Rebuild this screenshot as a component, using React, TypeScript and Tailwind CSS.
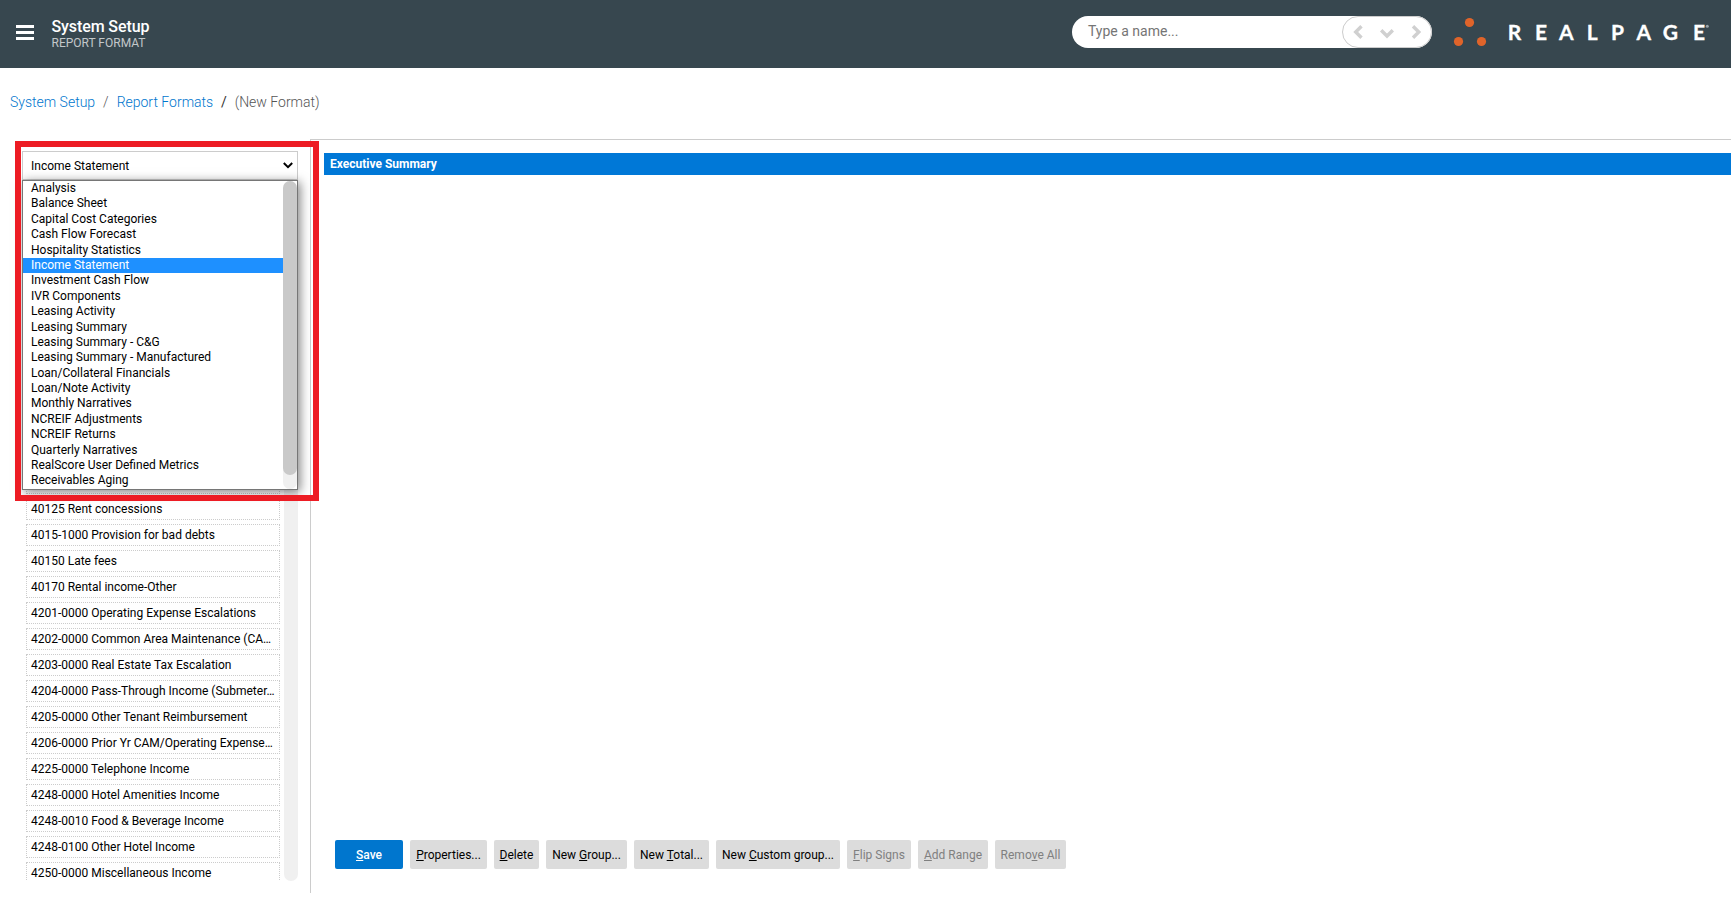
import React, { useState } from "react";

interface IAction {
  before: string;
  key: string;
  after: string;
  className: string;
  disabled?: boolean;
}

const categories: string[] = [
  "Analysis",
  "Balance Sheet",
  "Capital Cost Categories",
  "Cash Flow Forecast",
  "Hospitality Statistics",
  "Income Statement",
  "Investment Cash Flow",
  "IVR Components",
  "Leasing Activity",
  "Leasing Summary",
  "Leasing Summary - C&G",
  "Leasing Summary - Manufactured",
  "Loan/Collateral Financials",
  "Loan/Note Activity",
  "Monthly Narratives",
  "NCREIF Adjustments",
  "NCREIF Returns",
  "Quarterly Narratives",
  "RealScore User Defined Metrics",
  "Receivables Aging",
];

const accounts: string[] = [
  "",
  "40125 Rent concessions",
  "4015-1000 Provision for bad debts",
  "40150 Late fees",
  "40170 Rental income-Other",
  "4201-0000 Operating Expense Escalations",
  "4202-0000 Common Area Maintenance (CA…",
  "4203-0000 Real Estate Tax Escalation",
  "4204-0000 Pass-Through Income (Submeter…",
  "4205-0000 Other Tenant Reimbursement",
  "4206-0000 Prior Yr CAM/Operating Expense…",
  "4225-0000 Telephone Income",
  "4248-0000 Hotel Amenities Income",
  "4248-0010 Food & Beverage Income",
  "4248-0100 Other Hotel Income",
  "4250-0000 Miscellaneous Income",
];

const actions: IAction[] = [
  { before: "", key: "P", after: "roperties...", className: "w-[77px]" },
  { before: "", key: "D", after: "elete", className: "w-[45px]" },
  { before: "New ", key: "G", after: "roup...", className: "w-[81px]" },
  { before: "New ", key: "T", after: "otal...", className: "w-[75px]" },
  { before: "New ", key: "C", after: "ustom group...", className: "w-[124px]" },
  { before: "", key: "F", after: "lip Signs", className: "w-[64px]", disabled: true },
  { before: "", key: "A", after: "dd Range", className: "w-[70px]", disabled: true },
  { before: "Remo", key: "v", after: "e All", className: "w-[71px]", disabled: true },
];

const Logo = () => (
  <svg width="262" height="36" viewBox="0 0 262 36" className="block">
    <g fill="#e0642a">
      <circle cx="19.5" cy="8.5" r="4.6" />
      <circle cx="8.5" cy="27.5" r="4.6" />
      <circle cx="31.5" cy="27.5" r="4.6" />
    </g>
    <text
      x="57.7 85 109 136.800 161 186.500 212.700 243"
      y="26"
      fill="#fff"
      stroke="#fff"
      strokeWidth="0.3"
      className="font-['Lato'] text-[21px] font-bold"
    >
      REALPAGE
    </text>
    <circle cx="257.300" cy="12.300" r="1.500" fill="#9aa4a9" />
  </svg>
);

const Header = () => (
  <header className="flex h-[68px] items-start bg-[#37474f]">
    <button className="mt-[25px] ml-4 flex w-[18px] flex-col gap-[3px]">
      <span className="h-[3px] w-full bg-white"></span>
      <span className="h-[3px] w-full bg-white"></span>
      <span className="h-[3px] w-full bg-white"></span>
    </button>
    <div className="mt-[17px] ml-[17.5px] flex-1">
      <h1 className="text-base leading-[19px] font-medium tracking-[-0.1px] text-white">
        System Setup
      </h1>
      <p className="text-xs leading-[14px] text-[#c3c8ca]">REPORT FORMAT</p>
    </div>
    <div className="mt-4 flex h-8 w-[360px] rounded-full bg-white">
      <span className="flex-1 pl-4 text-sm leading-[30px] text-[#757575]">Type a name...</span>
      <div className="flex w-[90px] rounded-full border border-[#ccc]">
        <svg width="88" height="30" viewBox="0 0 88 30" fill="none" stroke="#d0d0d0" strokeWidth="3.4">
          <path d="M18.500 9.200L12.700 15l5.800 5.800" />
          <path d="M38.200 13.200L44 19l5.800-5.800" />
          <path d="M70 9.200L75.800 15L70 20.800" />
        </svg>
      </div>
    </div>
    <div className="mt-[14px] mr-[19px] ml-[18px]">
      <Logo />
    </div>
  </header>
);

const CategorySelect = () => {
  const [selected, setSelected] = useState<string>("Income Statement");

  return (
    <div className="relative ml-[22px] w-[276px]">
      <div className="flex h-[29px] items-center justify-between border border-[#ccc] bg-white pr-[4px] pl-2 text-xs">
        <span>{selected}</span>
        <svg width="10" height="7" viewBox="0 0 10 7" fill="none" stroke="#000" strokeWidth="2">
          <path d="M0.800 1L5 5.200L9.200 1" />
        </svg>
      </div>

      {/* option list */}
      <div className="absolute top-[29px] left-0 flex h-[310px] w-[276px] border border-[#767676] bg-white shadow-[2px_2px_10px_rgba(0,0,0,0.5)]">
        <ul className="flex-1">
          {categories.map((name) => (
            <li
              key={name}
              onClick={() => setSelected(name)}
              className={`h-[15.4px] pl-2 text-xs leading-[14px] ${
                name === selected ? "bg-[#1e90ff] text-white" : ""
              }`}
            >
              {name}
            </li>
          ))}
        </ul>
        <div className="w-[14px] rounded-full bg-[#f0f0f0]">
          <div className="h-[294px] rounded-full bg-[#c9c9c9]"></div>
        </div>
      </div>

      {/* highlight frame */}
      <div className="pointer-events-none absolute top-[-10px] left-[-7px] h-[360px] w-[304px] border-[6px] border-[#ed1c24]"></div>
    </div>
  );
};

const App = () => {
  return (
    <div className="flex h-[902px] w-full flex-col overflow-hidden bg-white font-['Roboto',sans-serif] text-black">
      <Header />
      <nav className="flex h-[71px] pt-[25px] pl-[10px] text-sm leading-[18px] font-light text-[#333]">
        <a className="text-[#0076ce]">System Setup</a>
        <span className="w-[21.5px] text-center text-[#555]">/</span>
        <a className="text-[#0076ce]">Report Formats</a>
        <span className="w-[21.5px] text-center font-normal">/</span>
        <span className="text-[#555]">(New Format)</span>
      </nav>
      <div className="flex h-[754px]">
        <aside className="relative z-10 w-[310px] pt-3">
          <CategorySelect />
          <div className="relative z-[-1] mt-[292px] ml-[26px] flex h-[409px] w-[272px] justify-between">
            <ul className="flex h-[408px] w-[254px] flex-col gap-1 overflow-hidden">
              {accounts.map((account) => (
                <li
                  key={account}
                  className="h-[22px] shrink-0 border border-dotted border-[#ccc] pl-1 text-xs leading-[20px] whitespace-nowrap"
                >
                  {account}
                </li>
              ))}
            </ul>
            <div className="w-[14px] rounded-full bg-[#f0f0f0]"></div>
          </div>
        </aside>
        <main className="flex flex-1 flex-col border-t border-l border-[#ccc] pt-[13px]">
          <h2 className="ml-[13px] h-[22px] bg-[#0078d7] pl-[6px] text-xs leading-[22px] font-bold text-white">
            Executive Summary
          </h2>
          <div className="mt-auto mb-6 ml-6 flex gap-[7px] text-xs">
            <button className="h-[29px] w-[68px] rounded-[2px] bg-[#0076ce] font-medium text-white">
              <span className="underline">S</span>ave
            </button>
            {actions.map((action) => (
              <button
                key={action.key}
                disabled={action.disabled}
                className={`h-[29px] rounded-[2px] bg-[#dcdcdc] whitespace-nowrap ${action.className} ${
                  action.disabled ? "text-[#808080]" : "text-black"
                }`}
              >
                {action.before}
                <span className="underline">{action.key}</span>
                {action.after}
              </button>
            ))}
          </div>
        </main>
      </div>
    </div>
  );
};

export default App;
